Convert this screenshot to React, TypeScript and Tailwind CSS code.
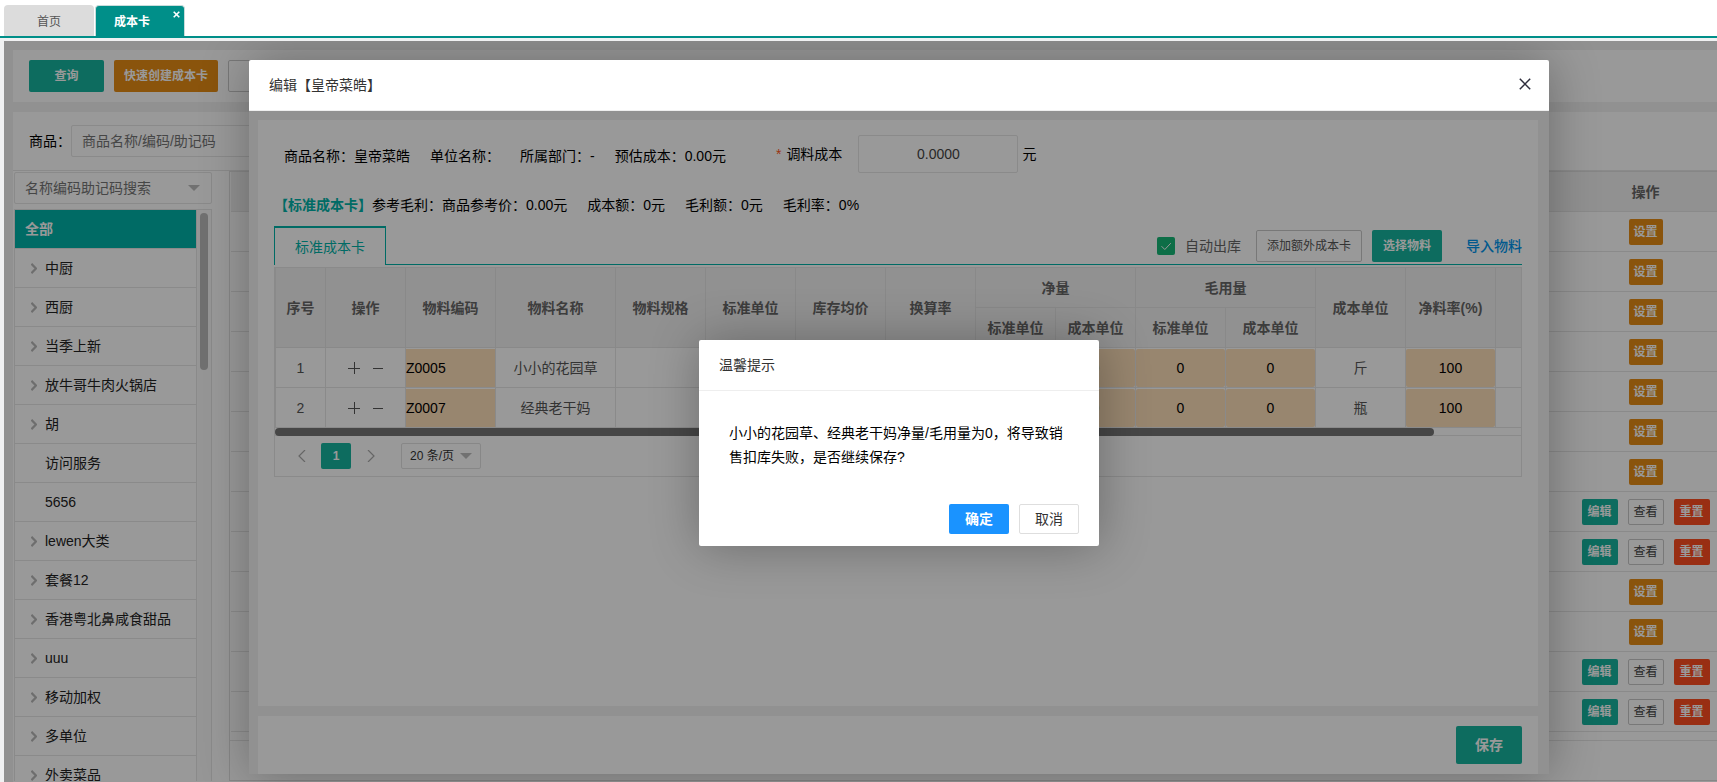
import type { ReactNode } from 'react'
import clsx from 'clsx'

const categories = [
  { name: '中厨', expandable: true },
  { name: '西厨', expandable: true },
  { name: '当季上新', expandable: true },
  { name: '放牛哥牛肉火锅店', expandable: true },
  { name: '胡', expandable: true },
  { name: '访问服务', expandable: false },
  { name: '5656', expandable: false },
  { name: 'lewen大类', expandable: true },
  { name: '套餐12', expandable: true },
  { name: '香港粤北鼻咸食甜品', expandable: true },
  { name: 'uuu', expandable: true },
  { name: '移动加权', expandable: true },
  { name: '多单位', expandable: true },
  { name: '外卖菜品', expandable: true },
]

// true: a cost card already exists for this product
const productRows = [
  false, false, false, false, false, false, false,
  true, true, false, false, true, true,
]

const materials = [
  { code: 'Z0005', name: '小小的花园草', unit: '斤' },
  { code: 'Z0007', name: '经典老干妈', unit: '瓶' },
]

function Caret({ className }: { className?: string }) {
  return (
    <svg
      className={clsx('pointer-events-none absolute top-1/2 -translate-y-1/2', className)}
      width="12"
      height="6"
      viewBox="0 0 12 6"
    >
      <path d="M0 0h12L6 6z" fill="#bdbdbd" />
    </svg>
  )
}

function SmallButton({ className, children }: { className: string; children: ReactNode }) {
  return (
    <button className={clsx('h-[26px] rounded-xs text-xs', className)}>{children}</button>
  )
}

function TopTabs() {
  return (
    <nav className="flex shrink-0 items-end gap-px border-b-2 border-[#008f89] bg-white px-1 pt-[5px]">
      <button className="h-[31px] w-[90px] rounded-t-sm bg-[#dcdcdc] pt-[2px] text-xs text-[#555]">
        首页
      </button>
      <div className="relative flex h-[31px] w-[90px] rounded-t-sm border border-b-0 border-[#c9dcdb] bg-[#008f89]">
        <button className="w-full pt-px pr-4 text-xs font-bold text-white">成本卡</button>
        <button aria-label="关闭" className="absolute top-[5px] right-1 text-white">
          <svg width="7" height="7" viewBox="0 0 7 7">
            <path d="M.7.7l5.6 5.6M6.3.7L.7 6.3" stroke="currentColor" strokeWidth="1.6" />
          </svg>
        </button>
      </div>
    </nav>
  )
}

function CategoryTree() {
  return (
    <aside className="flex w-[198px] shrink-0 flex-col pt-px">
      <div className="relative">
        <select
          aria-label="名称编码助记码搜索"
          className="h-8 w-full appearance-none rounded-xs border border-[#e6e6e6] bg-white px-[10px] text-sm text-[#757575]"
        >
          <option>名称编码助记码搜索</option>
        </select>
        <Caret className="right-3" />
      </div>
      <div className="mt-[5px] flex min-h-0 flex-1 overflow-hidden border border-b-0 border-[#e6e6e6] bg-[#fafafa]">
        <ul className="w-[182px] shrink-0 border-r border-[#e6e6e6] bg-white">
          <li className="flex h-[39px] items-center border-b border-[#e6e6e6] bg-[#00b2a8] px-[10px] text-sm font-bold text-white">
            全部
          </li>
          {categories.map((item) => (
            <li
              key={item.name}
              className="flex h-[39px] items-center border-b border-[#e6e6e6] pl-4 text-sm text-[#222]"
            >
              <svg className="mr-2 shrink-0" width="6" height="11" viewBox="0 0 6 11">
                {item.expandable && (
                  <path d="M.4.8l4.500 4.700L.4 10.200" fill="none" stroke="#b8b8b8" strokeWidth="2.200" />
                )}
              </svg>
              {item.name}
            </li>
          ))}
        </ul>
        <div className="ml-[3px] mt-[3px] h-[157px] w-2 rounded-full bg-[#bbb]" />
      </div>
    </aside>
  )
}

function ProductTable() {
  return (
    <div className="ml-[17px] min-w-0 flex-1 border border-r-0 border-[#e0e0e0]">
      <div className="border-b border-[#e6e6e6] pb-2 pl-px">
        <table className="w-full table-fixed border-separate border-spacing-0 text-sm">
          <thead>
            <tr className="h-10 bg-[#f2f2f2]">
              <th className="border-b border-[#e6e6e6]" />
              <th className="w-[143px] border-b border-[#e6e6e6] text-center font-bold text-[#666]">
                操作
              </th>
            </tr>
          </thead>
          <tbody>
            {productRows.map((hasCard, index) => (
              <tr key={index} className="h-10">
                <td className="border-b border-[#e6e6e6] p-0" />
                <td className="border-b border-[#e6e6e6] p-0">
                  <div className="flex items-center justify-center gap-[10px]">
                    {hasCard ? (
                      <>
                        <SmallButton className="w-9 bg-[#16b49e] font-bold text-white">编辑</SmallButton>
                        <SmallButton className="w-9 border border-[#c9c9c9] bg-white text-[#444]">查看</SmallButton>
                        <SmallButton className="w-9 bg-[#ff4d20] font-bold text-white">重置</SmallButton>
                      </>
                    ) : (
                      <SmallButton className="w-[34px] bg-[#e68c14] font-bold text-white">设置</SmallButton>
                    )}
                  </div>
                </td>
              </tr>
            ))}
          </tbody>
        </table>
      </div>
    </div>
  )
}

function ProductPage() {
  return (
    <div className="flex h-full flex-col gap-[10px] pt-[9px] pl-[9px]">
      <div className="flex h-[52px] shrink-0 items-center gap-[10px] bg-white px-4">
        <button className="h-8 w-[75px] rounded-xs bg-[#16b49e] text-xs font-bold text-white">
          查询
        </button>
        <button className="h-8 w-[104px] rounded-xs bg-[#e68c14] text-xs font-bold text-white">
          快速创建成本卡
        </button>
        <button
          aria-label="更多"
          className="h-8 w-[104px] rounded-xs border border-[#c9c9c9] bg-white"
        />
      </div>
      <div className="flex min-h-0 flex-1 flex-col bg-white">
        <div className="flex h-[59px] shrink-0 items-center border-b border-[#e6e6e6] px-4">
          <label htmlFor="keyword" className="w-[42px] text-sm text-black">
            商品：
          </label>
          <input
            id="keyword"
            placeholder="商品名称/编码/助记码"
            className="h-8 w-[190px] rounded-xs border border-[#e6e6e6] px-[10px] text-sm placeholder:text-[#757575]"
          />
        </div>
        <div className="flex min-h-0 flex-1 pb-px pl-px">
          <CategoryTree />
          <ProductTable />
        </div>
      </div>
    </div>
  )
}

function HeadCell({ children, sub }: { children?: ReactNode; sub?: boolean }) {
  return (
    <th
      rowSpan={sub ? 1 : 2}
      className="border-r border-b border-[#e4e4e4] p-0 text-center font-bold text-[#666]"
    >
      {children}
    </th>
  )
}

function EditCell({ value, label }: { value: string; label: string }) {
  return (
    <td className="border-r border-b border-[#e6e6e6] p-0 pt-px">
      <input
        aria-label={label}
        defaultValue={value}
        className="block h-[38px] w-full rounded-xs bg-[#fedfba] text-center text-sm text-black"
      />
    </td>
  )
}

function PlainCell({ children }: { children?: ReactNode }) {
  return (
    <td className="border-r border-b border-[#e6e6e6] p-0 text-center text-[#555]">{children}</td>
  )
}

function MaterialTable() {
  return (
    <div className="mt-[2px] border border-[#e6e6e6]">
      <div className="border-l border-[#e6e6e6]">
        <table className="w-full table-fixed border-separate border-spacing-0 text-sm">
          <colgroup>
            <col className="w-[50px]" />
            <col className="w-[80px]" />
            <col className="w-[90px]" />
            <col className="w-[120px]" />
            <col className="w-[90px]" />
            <col className="w-[90px]" />
            <col className="w-[90px]" />
            <col className="w-[90px]" />
            <col className="w-[80px]" />
            <col className="w-[80px]" />
            <col className="w-[90px]" />
            <col className="w-[90px]" />
            <col className="w-[90px]" />
            <col className="w-[90px]" />
            <col />
          </colgroup>
          <thead className="bg-[#f2f2f2]">
            <tr className="h-10">
              <HeadCell>序号</HeadCell>
              <HeadCell>操作</HeadCell>
              <HeadCell>物料编码</HeadCell>
              <HeadCell>物料名称</HeadCell>
              <HeadCell>物料规格</HeadCell>
              <HeadCell>标准单位</HeadCell>
              <HeadCell>库存均价</HeadCell>
              <HeadCell>换算率</HeadCell>
              <th colSpan={2} className="border-r border-b border-[#e4e4e4] p-0 font-bold text-[#666]">
                净量
              </th>
              <th colSpan={2} className="border-r border-b border-[#e4e4e4] p-0 font-bold text-[#666]">
                毛用量
              </th>
              <HeadCell>成本单位</HeadCell>
              <HeadCell>净料率(%)</HeadCell>
              <th rowSpan={2} className="border-b border-[#e4e4e4]" />
            </tr>
            <tr className="h-10">
              <HeadCell sub>标准单位</HeadCell>
              <HeadCell sub>成本单位</HeadCell>
              <HeadCell sub>标准单位</HeadCell>
              <HeadCell sub>成本单位</HeadCell>
            </tr>
          </thead>
          <tbody>
            {materials.map((row, index) => (
              <tr key={row.code} className="h-10">
                <PlainCell>{index + 1}</PlainCell>
                <PlainCell>
                  <div className="flex items-center justify-center gap-3">
                    <button aria-label="添加">
                      <svg className="block" width="12" height="12" viewBox="0 0 12 12">
                        <path d="M0 6.500h12M6.500 0v12" stroke="#555" />
                      </svg>
                    </button>
                    <button aria-label="删除">
                      <svg className="block" width="12" height="12" viewBox="0 0 12 12">
                        <path d="M1 6.500h10" stroke="#555" />
                      </svg>
                    </button>
                  </div>
                </PlainCell>
                <td className="border-r border-b border-[#e6e6e6] p-0 pt-px">
                  <input
                    aria-label="物料编码"
                    defaultValue={row.code}
                    className="block h-[38px] w-full bg-[#fedfba] text-sm text-black"
                  />
                </td>
                <PlainCell>{row.name}</PlainCell>
                <PlainCell />
                <PlainCell />
                <PlainCell />
                <PlainCell />
                <EditCell label="净量标准单位" value="0" />
                <EditCell label="净量成本单位" value="0" />
                <EditCell label="毛用量标准单位" value="0" />
                <EditCell label="毛用量成本单位" value="0" />
                <PlainCell>{row.unit}</PlainCell>
                <EditCell label="净料率" value="100" />
                <td className="border-b border-[#e6e6e6]" />
              </tr>
            ))}
          </tbody>
        </table>
      </div>
      <div className="border-b border-[#e6e6e6]">
        <div className="-mb-px h-2 w-[93%] rounded-full bg-[#757575]" />
      </div>
      <div className="flex h-10 items-center pl-[21px] text-xs">
        <button aria-label="上一页">
          <svg width="12" height="12" viewBox="0 0 12 12">
            <path d="M9 0L3 6l6 6" fill="none" stroke="#aaa" strokeWidth="1.200" />
          </svg>
        </button>
        <button className="ml-[13px] h-[26px] w-[30px] rounded-xs bg-[#16b49e] font-bold text-white">
          1
        </button>
        <button aria-label="下一页" className="ml-[14px]">
          <svg width="12" height="12" viewBox="0 0 12 12">
            <path d="M3 0l6 6-6 6" fill="none" stroke="#aaa" strokeWidth="1.200" />
          </svg>
        </button>
        <div className="relative ml-6">
          <select
            aria-label="每页条数"
            className="h-[26px] w-20 appearance-none rounded-xs border border-[#e2e2e2] bg-white px-2 text-xs text-[#333]"
          >
            <option>20 条/页</option>
          </select>
          <Caret className="right-[9px]" />
        </div>
      </div>
    </div>
  )
}

function CostCardForm() {
  return (
    <div className="flex h-full flex-col gap-[10px] bg-[#f2f2f2] pt-[9px] pr-[11px] pl-[9px] text-sm text-black">
      <div className="min-h-0 flex-1 bg-white px-4 pt-[15px]">
        <div className="flex h-[38px] items-center pl-[10px]">
          <div className="flex gap-5 pt-1">
            <span>商品名称：皇帝菜皓</span>
            <span className="w-[70px]">单位名称：</span>
            <span>所属部门：-</span>
            <span>预估成本：0.00元</span>
          </div>
          <label htmlFor="seasoning" className="ml-[50px]">
            <span className="mr-[5px] text-[#ff5722]">*</span>调料成本
          </label>
          <input
            id="seasoning"
            defaultValue="0.0000"
            className="ml-4 h-[38px] w-40 rounded-xs border border-[#e6e6e6] bg-white text-center text-[#444]"
          />
          <span className="ml-1">元</span>
        </div>
        <div className="mt-5 flex h-6 items-center gap-5">
          <span>
            <b className="font-bold text-[#00b2a8]">【标准成本卡】</b>
            参考毛利：商品参考价：0.00元
          </span>
          <span>成本额：0元</span>
          <span>毛利额：0元</span>
          <span>毛利率：0%</span>
        </div>
        <div className="mt-[9px] flex h-[39px] items-stretch">
          <button className="w-28 shrink-0 border border-t-2 border-b-0 border-[#00b2a8] text-[#00b2a8]">
            标准成本卡
          </button>
          <div className="flex flex-1 items-center justify-end border-b border-[#00b2a8] pt-px">
            <label className="mr-[15px] flex items-center gap-[10px] text-[#666]">
              <span className="relative flex">
                <input
                  type="checkbox"
                  defaultChecked
                  className="size-[18px] appearance-none rounded-xs bg-[#16b777]"
                />
                <svg className="absolute inset-0" width="18" height="18" viewBox="0 0 18 18">
                  <path d="M4.500 9.200l3.300 3.300 6-6.300" fill="none" stroke="#fff" />
                </svg>
              </span>
              自动出库
            </label>
            <button className="h-8 w-[106px] rounded-xs border border-[#c9c9c9] bg-white text-xs text-[#555]">
              添加额外成本卡
            </button>
            <button className="ml-[10px] h-8 w-[70px] rounded-xs bg-[#16b49e] text-xs font-bold text-white">
              选择物料
            </button>
            <a href="#" className="ml-6 font-medium text-[#0094ec]">
              导入物料
            </a>
          </div>
        </div>
        <MaterialTable />
      </div>
      <div className="flex h-[58px] shrink-0 items-center justify-end bg-white px-4">
        <button className="h-[38px] w-[66px] rounded-xs bg-[#16b49e] text-sm font-bold text-white">
          保存
        </button>
      </div>
    </div>
  )
}

function ConfirmDialog() {
  return (
    <div
      role="alertdialog"
      aria-label="温馨提示"
      className="w-[400px] rounded-xs bg-white shadow-[1px_1px_50px_rgba(0,0,0,0.3)]"
    >
      <h2 className="flex h-[51px] items-center border-b border-[#eee] px-5 text-sm text-[#333]">
        温馨提示
      </h2>
      <p className="px-[30px] py-[30px] text-sm leading-6 text-black">
        小小的花园草、经典老干妈净量/毛用量为0，将导致销售扣库失败，是否继续保存?
      </p>
      <div className="flex justify-end gap-[10px] px-5 pt-[5px] pb-3">
        <button className="h-[30px] w-[60px] rounded-xs bg-[#1a93ff] text-sm font-bold text-white">
          确定
        </button>
        <button className="h-[30px] w-[60px] rounded-xs border border-[#dedede] bg-white text-sm text-[#333]">
          取消
        </button>
      </div>
    </div>
  )
}

export default function App() {
  return (
    <div className="flex h-screen flex-col overflow-hidden bg-[#f0f1f2] font-['Liberation_Sans','Noto_Sans_CJK_SC',sans-serif]">
      <TopTabs />
      <main className="relative mt-[3px] ml-1 min-h-0 flex-1 overflow-hidden bg-[#f2f2f2]">
        <ProductPage />

        {/* Edit modal */}
        <div className="absolute inset-0 flex bg-black/40 pt-[19px] pr-[168px] pb-2 pl-[245px]">
          <div
            role="dialog"
            aria-label="编辑"
            className="flex min-w-0 flex-1 flex-col rounded-xs bg-white shadow-[1px_1px_50px_rgba(0,0,0,0.3)]"
          >
            <header className="flex h-[51px] shrink-0 items-center justify-between border-b border-[#eee] px-5 text-sm text-[#333]">
              <h1>编辑【皇帝菜皓】</h1>
              <button aria-label="关闭" className="-mt-[2px] mr-[-2px]">
                <svg width="12" height="12" viewBox="0 0 12 12">
                  <path d="M.8.8l10.400 10.400M11.200.8L.8 11.200" stroke="#2e2d3c" strokeWidth="1.500" />
                </svg>
              </button>
            </header>
            <div className="relative min-h-0 flex-1 overflow-hidden">
              <CostCardForm />
              <div className="absolute inset-0 flex items-center justify-center bg-black/40">
                <ConfirmDialog />
              </div>
            </div>
          </div>
        </div>
      </main>
    </div>
  )
}
